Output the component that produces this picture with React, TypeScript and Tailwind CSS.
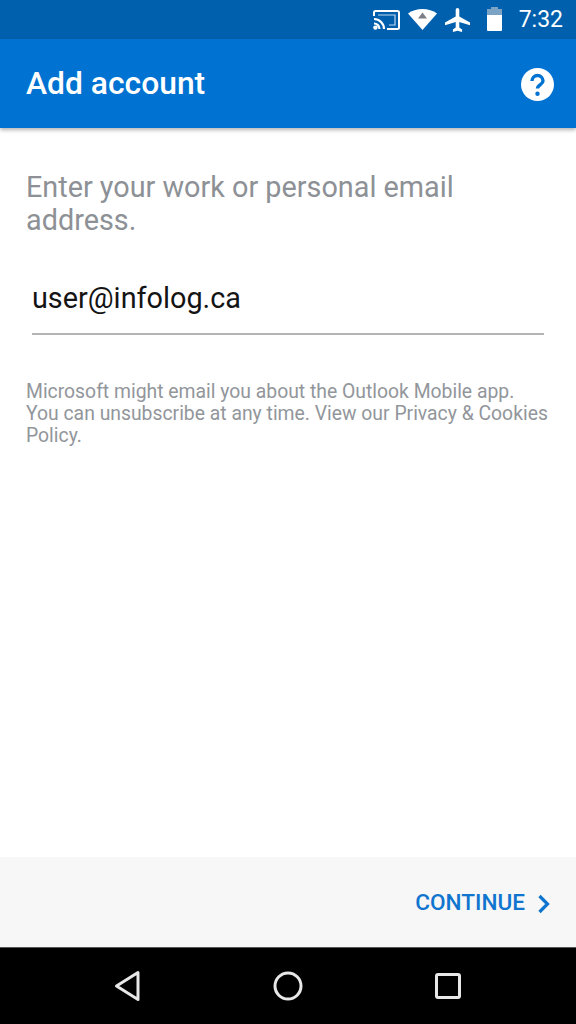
export default function App() {
  return (
    <div className="w-[576px] h-[1024px] flex flex-col bg-white overflow-hidden font-['Roboto',sans-serif]">
      <div className="h-[39px] shrink-0 bg-[#0060ad] flex items-center justify-end pr-[13px] text-white">
        <svg width="27" height="20" viewBox="0 0 27 20" className="mr-[8px]" fill="none">
          <path d="M1 6V2.500A1.500 1.500 0 0 1 2.500 1h22A1.500 1.500 0 0 1 26 2.500v15a1.500 1.500 0 0 1-1.500 1.500H14" stroke="#fff" strokeWidth="2" />
          <path d="M1 9a10 10 0 0 1 10 10M1 13.500A5.500 5.500 0 0 1 6.500 19" stroke="#fff" strokeWidth="2.200" />
          <circle cx="2.400" cy="17.600" r="2.200" fill="#fff" />
          <path d="M5 5h17v10h-6" stroke="#fff" strokeWidth="1.200" opacity="0.75" />
        </svg>
        <svg width="29" height="21" viewBox="0 0 29 21" className="mr-[8px]">
          <path d="M14.500 21 0 4.500C4 1.500 9 0 14.500 0S25 1.500 29 4.500z" fill="#fff" />
          <path d="M14.500 3.500 19 9.500h-9z" fill="#7a7f85" />
        </svg>
        <svg width="25" height="24" viewBox="0 0 25 24" className="mr-[17px]">
          <path fill="#fff" d="M10.700 2c0-1.100.8-2 1.800-2s1.800.9 1.800 2v6.500L25 14.500v2.700l-10.700-3.300v5.500l2.800 2.100V24l-4.600-1.300L7.900 24v-2.500l2.800-2.100v-5.500L0 17.200v-2.700l10.700-6z" />
        </svg>
        <div className="w-[15px] h-[22px] mr-[17px] relative bg-white rounded-[1px]">
          <div className="absolute top-0 left-0 right-0 h-[6px] bg-[#7ba3c6]" />
          <div className="absolute top-[-2px] left-[4px] w-[7px] h-[2px] bg-[#7ba3c6]" />
        </div>
        <span className="text-[23px] leading-none font-normal">7:32</span>
      </div>

      <div className="relative z-10 h-[89px] shrink-0 bg-[#0072d2] flex items-center justify-between pl-[26px] pr-[22px] shadow-[0_2px_4px_rgba(0,0,0,0.3)]">
        <h1 className="text-white text-[31.800px] font-medium leading-none mt-[1px]">Add account</h1>
        <svg width="33" height="33" viewBox="0 0 33 33" className="mt-[2px]">
          <circle cx="16.500" cy="16.500" r="16.500" fill="#fff" />
          <path d="M11 13a5.500 5.500 0 0 1 11 0c0 3.400-5.500 3.700-5.500 7.500" fill="none" stroke="#0072d2" strokeWidth="3.400" />
          <circle cx="16.500" cy="25.800" r="2.200" fill="#0072d2" />
        </svg>
      </div>

      <main className="flex-1 min-h-0 pt-[43px] px-[26px]">
        <p className="text-[28.800px] leading-[33px] text-[#8d9196] w-[500px]">Enter your work or personal email address.</p>
        <div className="mt-[27px] mx-[6px] h-[71px] border-b-2 border-[#b4b4b4] text-[28.800px] leading-[44px] text-[#141414] w-[512px] pt-[12px]">
          user@infolog.ca
        </div>
        <p className="mt-[46px] text-[19.350px] leading-[22px] text-[#92969b] w-[530px]">
          Microsoft might email you about the Outlook Mobile app.
          <br />
          You can unsubscribe at any time. View our Privacy &amp; Cookies
          <br />
          Policy.
        </p>
      </main>

      <div className="h-[90px] shrink-0 bg-[#f7f7f7] flex items-center justify-end pr-[25px]">
        <span className="text-[#0f75cf] text-[22.600px] font-medium leading-none mt-[3px]">CONTINUE</span>
        <svg width="14" height="20" viewBox="0 0 14 20" className="ml-[12px] mt-[3px]" fill="none">
          <path d="M2.500 2l8 8-8 8" stroke="#0f75cf" strokeWidth="3.200" />
        </svg>
      </div>

      <div className="h-[77px] shrink-0 bg-black border-t border-[#555] flex items-center justify-center pb-[1px]">
        <div className="w-[160px] flex justify-center">
          <svg width="28" height="32" viewBox="0 0 28 32" fill="none">
            <path d="M24 2.500v27L2.500 16z" stroke="#e8e8e8" strokeWidth="3" strokeLinejoin="round" />
          </svg>
        </div>
        <div className="w-[160px] flex justify-center">
          <svg width="30" height="30" viewBox="0 0 30 30" fill="none">
            <circle cx="15" cy="15" r="13" stroke="#e8e8e8" strokeWidth="3" />
          </svg>
        </div>
        <div className="w-[160px] flex justify-center">
          <svg width="26" height="26" viewBox="0 0 26 26" fill="none">
            <rect x="1.500" y="1.500" width="23" height="23" rx="1.500" stroke="#e8e8e8" strokeWidth="3" />
          </svg>
        </div>
      </div>
    </div>
  );
}
